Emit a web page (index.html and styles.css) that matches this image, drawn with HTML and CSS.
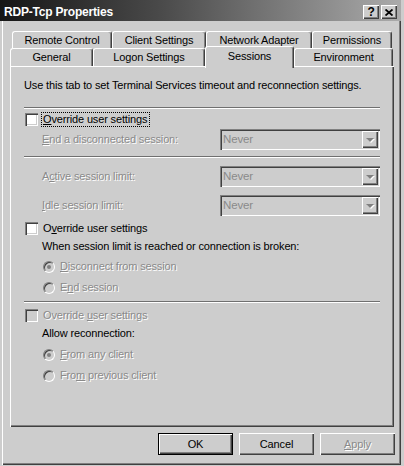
FILE: index.html
```html
<!DOCTYPE html>
<html>
<head>
<meta charset="utf-8">
<link rel="stylesheet" href="styles.css">
</head>
<body>
<div class="window">
  <div class="titlebar">
    <span class="title">RDP-Tcp Properties</span>
    <div class="tbtns">
      <span class="tbtn help">?</span>
      <span class="tbtn"><svg width="8" height="7" viewBox="0 0 8 7"><path d="M0.5 0.5 L7.5 6.5 M7.5 0.5 L0.5 6.5" stroke="#000" stroke-width="1.8"/></svg></span>
    </div>
  </div>

  <div class="tabs">
    <div class="tabrow back">
      <div class="tab w-rc">Remote Control</div>
      <div class="tab w-cs">Client Settings</div>
      <div class="tab w-na">Network Adapter</div>
      <div class="tab w-pm">Permissions</div>
    </div>
    <div class="tabrow front">
      <div class="tab w-gn">General</div>
      <div class="tab w-lg">Logon Settings</div>
      <div class="tab w-ss sel">Sessions</div>
      <div class="tab w-en">Environment</div>
    </div>
  </div>

  <div class="panel">
    <p class="intro">Use this tab to set Terminal Services timeout and reconnection settings.</p>
    <div class="sep gap-sep1"></div>

    <div class="check gap-4">
      <span class="box"></span>
      <span class="lbl focus"><u>O</u>verride user settings</span>
    </div>
    <div class="field gap-3">
      <span class="flabel dis"><u>E</u>nd a disconnected session:</span>
      <div class="combo"><span class="val">Never</span><span class="arrow"><span class="tri"></span></span></div>
    </div>
    <div class="sep gap-6"></div>

    <div class="field gap-8">
      <span class="flabel dis">A<u>c</u>tive session limit:</span>
      <div class="combo"><span class="val">Never</span><span class="arrow"><span class="tri"></span></span></div>
    </div>
    <div class="field gap-8">
      <span class="flabel dis"><u>I</u>dle session limit:</span>
      <div class="combo"><span class="val">Never</span><span class="arrow"><span class="tri"></span></span></div>
    </div>

    <div class="check gap-6">
      <span class="box"></span>
      <span class="lbl">O<u>v</u>erride user settings</span>
    </div>
    <p class="sub gap-5">When session limit is reached or connection is broken:</p>
    <div class="radio gap-7">
      <span class="rb on"></span>
      <span class="dis"><u>D</u>isconnect from session</span>
    </div>
    <div class="radio gap-8">
      <span class="rb"></span>
      <span class="dis">E<u>n</u>d session</span>
    </div>
    <div class="sep gap-7"></div>

    <div class="check gap-6">
      <span class="box off"></span>
      <span class="lbl dis">Override <u>u</u>ser settings</span>
    </div>
    <p class="sub gap-5">Allow reconnection:</p>
    <div class="radio gap-8">
      <span class="rb on"></span>
      <span class="dis"><u>F</u>rom any client</span>
    </div>
    <div class="radio gap-8">
      <span class="rb"></span>
      <span class="dis">Fro<u>m</u> previous client</span>
    </div>
  </div>

  <div class="buttons">
    <div class="btn default"><span>OK</span></div>
    <div class="btn"><span>Cancel</span></div>
    <div class="btn"><span class="dis"><u>A</u>pply</span></div>
  </div>
</div>
</body>
</html>
```

FILE: styles.css
```css
html, body {
  margin: 0;
  padding: 0;
  background: #cdcdcd;
}
body {
  font-family: "Liberation Sans", Arial, sans-serif;
  font-size: 11px;
  line-height: 13px;
  letter-spacing: -0.15px;
  color: #000;
}
p { margin: 0; }
u { text-decoration: underline; text-underline-offset: 1px; }

.window {
  width: 401px;
  height: 465px;
  background: #cdcdcd;
  box-shadow: inset 2px 0 0 #cdcdcd, inset 3px 0 0 #fff,
              inset -1px -1px 0 #404040, inset -2px -2px 0 #808080;
  display: flex;
  flex-direction: column;
}

/* title bar */
.titlebar {
  height: 21px;
  background: linear-gradient(to right, #161616 0%, #4a4a4a 40%, #ababab 100%);
  display: flex;
  justify-content: space-between;
  align-items: flex-start;
  padding: 0 4px 0 4px;
  flex-shrink: 0;
}
.title {
  color: #fff;
  font-weight: bold;
  font-size: 12px;
  line-height: 13px;
  letter-spacing: -0.2px;
  margin-top: 6px;
}
.tbtns {
  display: flex;
  gap: 2px;
  margin-top: 5px;
}
.tbtn {
  width: 16px;
  height: 14px;
  box-sizing: border-box;
  background: #cdcdcd;
  box-shadow: inset 1px 1px 0 #fff, inset -1px -1px 0 #404040, inset -2px -2px 0 #808080;
  display: flex;
  align-items: center;
  justify-content: center;
}
.help {
  font-weight: bold;
  font-size: 12px;
  line-height: 12px;
}

/* tabs */
.tabs {
  margin: 10px 0 0 10px;
  display: flex;
  flex-direction: column;
  flex-shrink: 0;
}
.tabrow {
  display: flex;
  align-items: flex-start;
}
.back { padding-left: 2px; height: 17px; }
.front { height: 18px; }
.tab {
  box-sizing: border-box;
  height: 17px;
  background: #cdcdcd;
  border-top: 1px solid #fff;
  border-left: 1px solid #fff;
  border-right: 1px solid #404040;
  box-shadow: inset -1px 0 0 #808080;
  border-radius: 3px 3px 0 0;
  text-align: center;
  padding-top: 2px;
  white-space: nowrap;
}
.front .tab { height: 18px; }
.front .tab.sel {
  height: 22px;
  margin-top: -2px;
  padding-top: 3px;
  position: relative;
  z-index: 1;
}
.w-rc { width: 100px; }
.w-cs { width: 94px; }
.w-na { width: 106px; }
.w-pm { width: 80px; }
.w-gn { width: 83px; }
.w-lg { width: 112px; }
.w-ss { width: 89px; }
.w-en { width: 99px; }

/* panel */
.panel {
  margin-left: 10px;
  width: 384px;
  height: 361px;
  box-sizing: border-box;
  padding: 13px 14px 0 14px;
  box-shadow: inset 1px 1px 0 #fff, inset -1px -1px 0 #404040, inset -2px -2px 0 #808080;
  display: flex;
  flex-direction: column;
  flex-shrink: 0;
}
.sep {
  height: 0;
  border-top: 1px solid #707070;
  border-bottom: 1px solid #fff;
}
.gap-sep1 { margin-top: 15px; }
.gap-3 { margin-top: 3px; }
.gap-4 { margin-top: 4px; }
.gap-5 { margin-top: 5px; }
.gap-6 { margin-top: 6px; }
.gap-7 { margin-top: 7px; }
.gap-8 { margin-top: 8px; }

.dis {
  color: #8a8a8a;
  text-shadow: 1px 1px 0 #fff;
}

.check {
  display: flex;
  align-items: center;
  height: 13px;
  padding-left: 1px;
}
.box {
  width: 13px;
  height: 13px;
  box-sizing: border-box;
  background: #fff;
  box-shadow: inset 1px 1px 0 #808080, inset 2px 2px 0 #404040,
              inset -1px -1px 0 #fff, inset -2px -2px 0 #cdcdcd;
  flex-shrink: 0;
}
.box.off { background: #cdcdcd; }
.lbl {
  margin-left: 3px;
  padding: 0 2px 0 1px;
  border: 1px dotted transparent;
}
.lbl.focus { border-color: #000; }

.field {
  display: flex;
  align-items: center;
  height: 21px;
  padding-left: 18px;
}
.flabel { flex: 1; }
.combo {
  width: 160px;
  height: 21px;
  box-sizing: border-box;
  background: #cdcdcd;
  box-shadow: inset 1px 1px 0 #808080, inset 2px 2px 0 #404040,
              inset -1px -1px 0 #fff, inset -2px -2px 0 #cdcdcd;
  display: flex;
  align-items: center;
  padding: 2px;
}
.val {
  flex: 1;
  color: #8a8a8a;
  padding-left: 1px;
  font-size: 11.5px;
}
.arrow {
  width: 16px;
  height: 17px;
  box-sizing: border-box;
  background: #cdcdcd;
  box-shadow: inset 1px 1px 0 #fff, inset -1px -1px 0 #404040, inset -2px -2px 0 #808080;
  display: flex;
  align-items: center;
  justify-content: center;
}
.tri {
  width: 0;
  height: 0;
  border-left: 4px solid transparent;
  border-right: 4px solid transparent;
  border-top: 4px solid #808080;
  filter: drop-shadow(1px 1px 0 #fff);
  margin-top: 1px;
}

.sub { padding-left: 18px; }

.radio {
  display: flex;
  align-items: center;
  height: 13px;
  padding-left: 19px;
  gap: 5px;
}
.rb {
  width: 12px;
  height: 12px;
  box-sizing: border-box;
  border-radius: 50%;
  border: 1px solid;
  border-color: #808080 #fff #fff #808080;
  background: #cdcdcd;
  box-shadow: inset 1px 1px 0 #404040;
  display: flex;
  align-items: center;
  justify-content: center;
  flex-shrink: 0;
}
.rb.on::after {
  content: "";
  width: 4px;
  height: 4px;
  border-radius: 50%;
  background: #808080;
}

/* buttons */
.buttons {
  display: flex;
  justify-content: flex-end;
  gap: 6px;
  margin-top: 6px;
  padding-right: 6px;
}
.btn {
  width: 75px;
  height: 22px;
  box-sizing: border-box;
  background: #cdcdcd;
  box-shadow: inset 1px 1px 0 #fff, inset -1px -1px 0 #404040, inset -2px -2px 0 #808080;
  display: flex;
  align-items: center;
  justify-content: center;
}
.btn.default {
  border: 1px solid #000;
}
```
